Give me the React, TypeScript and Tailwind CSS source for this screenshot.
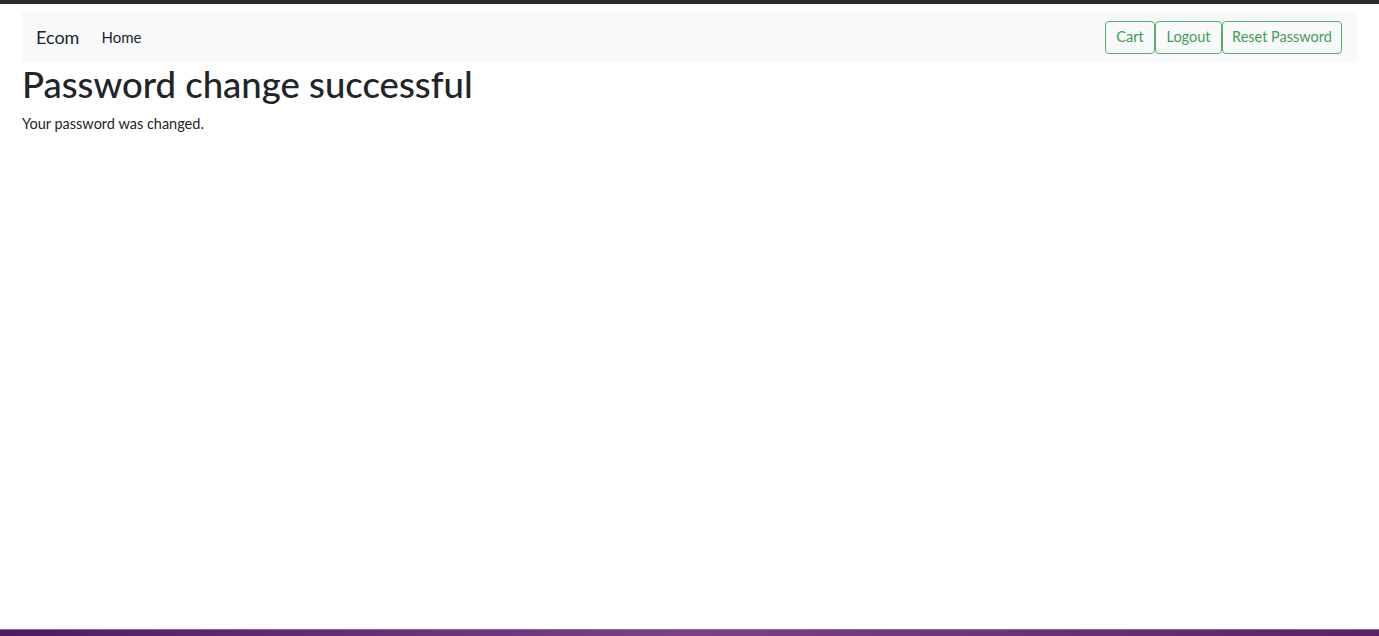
import React from 'react';

const font = { fontFamily: 'Lato, "Noto Sans", sans-serif' };

const btn =
  'h-[33px] flex items-center justify-center text-[14.5px] text-[#3d9f57] border border-[#52b068] rounded-[4px]';

export default function App() {
  return (
    <div className="h-[636px] flex flex-col bg-white text-[#212529] overflow-hidden" style={font}>
      {/* window top edge */}
      <div className="h-[4px] bg-[#2a2a2a]" />

      <div className="flex-1 px-[22px] pt-[8px]">
        {/* Navbar */}
        <nav className="h-[50px] bg-[#f8f9fa] flex items-center justify-between pl-[14px] pr-[15px]">
          <div className="flex items-center">
            <span className="text-[18px] mr-[22px]">Ecom</span>
            <span className="text-[15px]">Home</span>
          </div>
          <div className="flex">
            <button className={`${btn} w-[50px]`}>Cart</button>
            <button className={`${btn} w-[67px]`}>Logout</button>
            <button className={`${btn} w-[120px]`}>Reset Password</button>
          </div>
        </nav>

        <h1 className="text-[36.5px] font-medium leading-[1.2] mt-[1px] mb-[6px]">Password change successful</h1>
        <p className="text-[14.5px]">Your password was changed.</p>
      </div>

      {/* taskbar edge */}
      <div className="h-[7px] bg-gradient-to-r from-[#4e1a66] via-[#7d3f8c] to-[#5c1f6a] border-t border-[#8a6a94]" />
    </div>
  );
}
